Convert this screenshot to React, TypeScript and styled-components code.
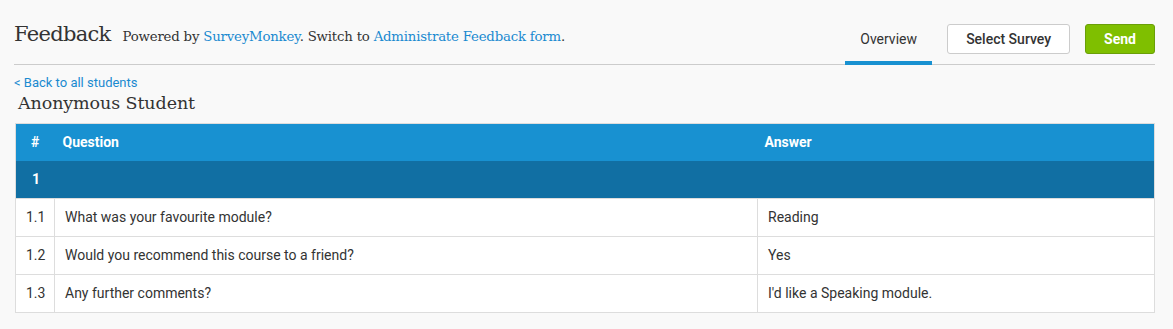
import React from "react";
import styled, { createGlobalStyle } from "styled-components";

const GlobalStyle = createGlobalStyle`
  html, body {
    margin: 0;
    padding: 0;
    background: #f9f9f9;
    font-family: Roboto, "Liberation Sans", sans-serif;
    color: #333;
  }
`;

const rows = [
  { num: "1.1", question: "What was your favourite module?", answer: "Reading" },
  { num: "1.2", question: "Would you recommend this course to a friend?", answer: "Yes" },
  { num: "1.3", question: "Any further comments?", answer: "I'd like a Speaking module." },
];

const Page = styled.div`
  padding: 0 18px 0 14px;
`;

const Header = styled.div`
  display: flex;
  align-items: stretch;
  height: 65px;
  border-bottom: 1px solid #cccccc;
  box-sizing: border-box;
`;

const TitleGroup = styled.div`
  display: flex;
  align-items: baseline;
  flex: 1;
  padding-top: 22px;
`;

const Title = styled.h1`
  margin: 0;
  font-family: "DejaVu Serif", "Liberation Serif", serif;
  font-weight: normal;
  font-size: 21px;
  letter-spacing: -0.7px;
  color: #333;
`;

const PoweredBy = styled.span`
  margin-left: 12px;
  font-family: "DejaVu Serif", "Liberation Serif", serif;
  font-size: 13.3px;
  letter-spacing: -0.2px;
  color: #333;
`;

const Link = styled.a`
  color: #1a8ad0;
  text-decoration: none;
`;

const Actions = styled.div`
  display: flex;
  align-items: flex-start;
  gap: 15px;
`;

const Tab = styled.div<{ $active?: boolean }>`
  display: flex;
  align-items: center;
  justify-content: center;
  width: 87px;
  height: 65px;
  box-sizing: border-box;
  padding-top: 16px;
  font-size: 14px;
  color: #333;
  border-bottom: 4px solid ${(p) => (p.$active ? "#1891d1" : "transparent")};
  margin-bottom: -1px;
`;

const Button = styled.button<{ $primary?: boolean }>`
  margin-top: 24px;
  height: 30px;
  padding: 0 18px;
  border-radius: 3px;
  font-family: Roboto, "Liberation Sans", sans-serif;
  font-size: 14px;
  cursor: pointer;
  background: ${(p) => (p.$primary ? "#7fbf00" : "#ffffff")};
  color: ${(p) => (p.$primary ? "#ffffff" : "#333")};
  border: 1px solid ${(p) => (p.$primary ? "#6a9f08" : "#cccccc")};
  font-weight: ${(p) => (p.$primary ? 700 : 500)};
`;

const BackLink = styled(Link)`
  display: block;
  margin-top: 10px;
  font-size: 13px;
`;

const StudentName = styled.h2`
  margin: 3px 0 0 4px;
  font-family: "DejaVu Serif", "Liberation Serif", serif;
  font-weight: normal;
  font-size: 17.5px;
  letter-spacing: -0.1px;
  color: #333;
`;

const Table = styled.table`
  margin: 10px 0 0 1px;
  width: calc(100% - 1px);
  table-layout: fixed;
  border-collapse: collapse;
  border: 1px solid #dddddd;
  font-size: 14px;
`;

const HeadCell = styled.th<{ $w?: string; $pad?: number }>`
  box-sizing: border-box;
  height: 37px;
  padding: 0 0 0 ${(p) => p.$pad ?? 8}px;
  text-align: left;
  background: #1891d1;
  color: #fff;
  font-weight: 700;
  font-size: 14px;
  width: ${(p) => p.$w || "auto"};
`;

const GroupCell = styled.td`
  height: 37px;
  padding: 0 0 0 16px;
  background: #116fa3;
  color: #fff;
  font-weight: 700;
  font-size: 14px;
`;

const Cell = styled.td`
  box-sizing: border-box;
  height: 38px;
  padding: 0 0 0 10px;
  background: #fff;
  border: 1px solid #dddddd;
  color: #333;
  font-size: 14px;
`;

export default function App() {
  return (
    <>
      <GlobalStyle />
      <Page>
        <Header>
          <TitleGroup>
            <Title>Feedback</Title>
            <PoweredBy>
              Powered by <Link href="#">SurveyMonkey</Link>. Switch to{" "}
              <Link href="#">Administrate Feedback form</Link>.
            </PoweredBy>
          </TitleGroup>
          <Actions>
            <Tab $active>Overview</Tab>
            <Button>Select Survey</Button>
            <Button $primary>Send</Button>
          </Actions>
        </Header>
        <BackLink href="#">&lt; Back to all students</BackLink>
        <StudentName>Anonymous Student</StudentName>
        <Table>
          <thead>
            <tr>
              <HeadCell $w="39px" $pad={15}>#</HeadCell>
              <HeadCell $w="703px">Question</HeadCell>
              <HeadCell $pad={7}>Answer</HeadCell>
            </tr>
          </thead>
          <tbody>
            <tr>
              <GroupCell colSpan={3}>1</GroupCell>
            </tr>
            {rows.map((r) => (
              <tr key={r.num}>
                <Cell>{r.num}</Cell>
                <Cell>{r.question}</Cell>
                <Cell>{r.answer}</Cell>
              </tr>
            ))}
          </tbody>
        </Table>
      </Page>
    </>
  );
}
